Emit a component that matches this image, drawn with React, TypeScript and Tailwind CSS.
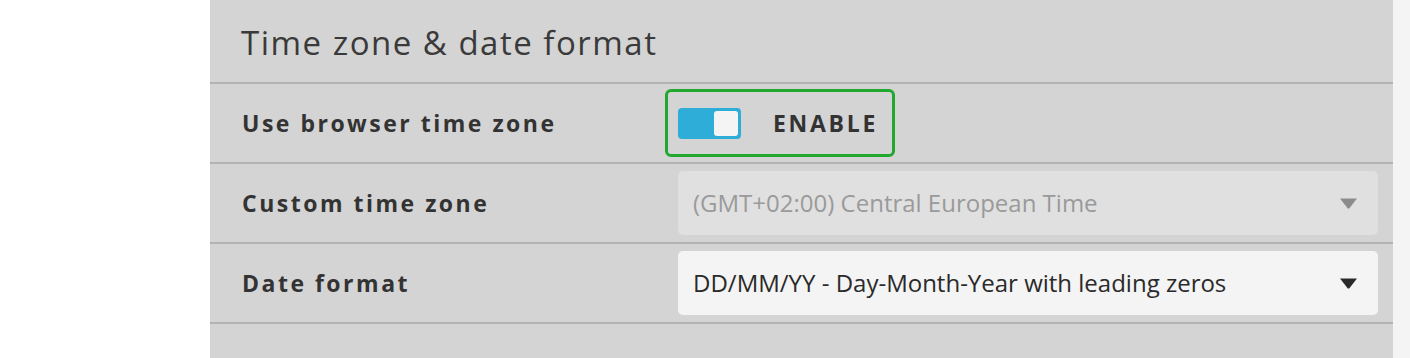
export default function App() {
  return (
    <div className="flex h-[358px] w-[1410px] bg-white" style={{ fontFamily: '"Open Sans", sans-serif' }}>
      <div className="w-[210px] shrink-0" />
      {/* settings panel */}
      <div className="flex w-[1183px] shrink-0 flex-col bg-[#d4d4d4]">
        <div className="flex h-[84px] items-center border-b-2 border-[#b2b2b2] pl-[31px] pt-[4px]">
          <h2 className="text-[33px] font-normal tracking-[1.5px] text-[#3a3a3a]">Time zone &amp; date format</h2>
        </div>

        <div className="flex h-[80px] items-center border-b-2 border-[#b2b2b2]">
          <div className="w-[468px] pl-[32px] text-[23px] font-bold tracking-[2.5px] text-[#333]">Use browser time zone</div>
          <div className="ml-[-13px] flex h-[68px] w-[230px] items-center rounded-[6px] border-[3px] border-[#23a82f] pl-[10px]">
            <div className="flex h-[31px] w-[63px] items-center justify-end rounded-[4px] bg-[#2eadd8] pr-[3px]">
              <div className="h-[25px] w-[24px] rounded-[3px] bg-[#f4f4f4]" />
            </div>
            <span className="ml-[32px] text-[23px] font-bold tracking-[2.7px] text-[#333]">ENABLE</span>
          </div>
        </div>

        <div className="flex h-[80px] items-center border-b-2 border-[#b2b2b2]">
          <div className="w-[468px] pl-[32px] text-[23px] font-bold tracking-[2.5px] text-[#333]">Custom time zone</div>
          <div className="flex h-[64px] w-[700px] items-center justify-between rounded-[5px] bg-[#e0e0e0] pl-[15px] pr-[21px]">
            <span className="text-[24px] text-[#9a9a9a]">(GMT+02:00) Central European Time</span>
            <svg width="17" height="12" viewBox="0 0 17 12"><path d="M0 1.5h17L9.2 11.5h-1.4z" fill="#8c8c8c" /></svg>
          </div>
        </div>

        <div className="flex h-[80px] items-center border-b-2 border-[#b2b2b2]">
          <div className="w-[468px] pl-[32px] text-[23px] font-bold tracking-[2.5px] text-[#333]">Date format</div>
          <div className="flex h-[64px] w-[700px] items-center justify-between rounded-[5px] bg-[#f4f4f4] pl-[15px] pr-[21px]">
            <span className="text-[24px] text-[#2a2a2a]">DD/MM/YY - Day-Month-Year with leading zeros</span>
            <svg width="17" height="12" viewBox="0 0 17 12"><path d="M0 1.5h17L9.2 11.5h-1.4z" fill="#2a2a2a" /></svg>
          </div>
        </div>
        <div className="flex-1" />
      </div>
      <div className="flex-1 bg-[#f4f4f4]" />
    </div>
  )
}
